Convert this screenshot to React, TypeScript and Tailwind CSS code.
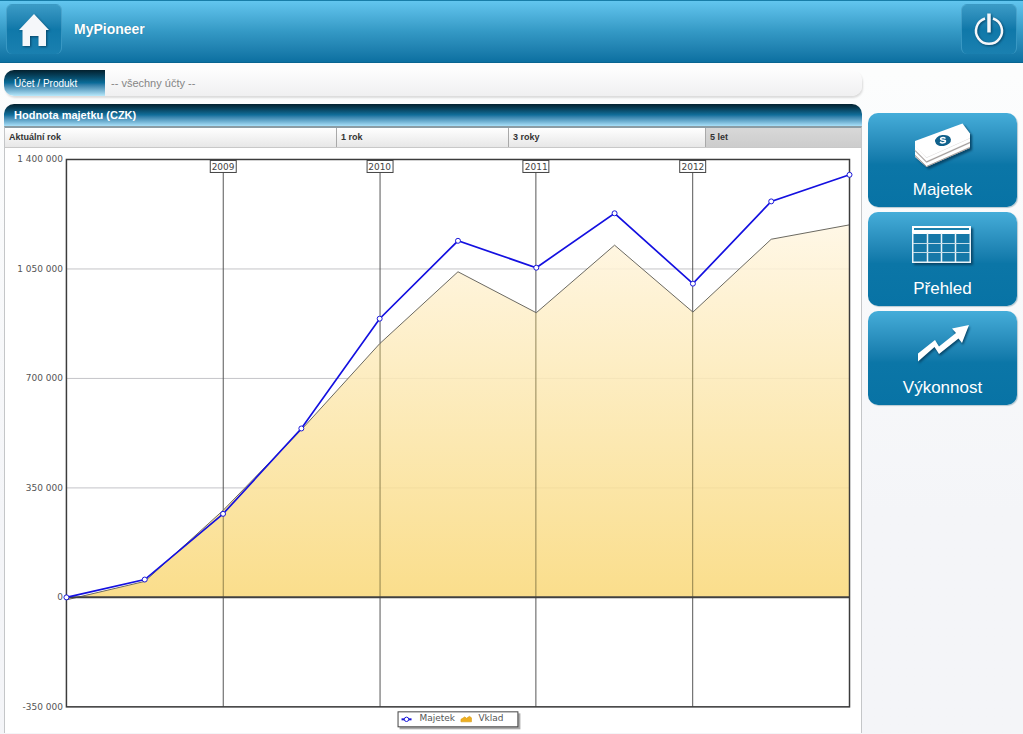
import React from "react";

const years = ["2009", "2010", "2011", "2012"];
const assets = [0, 57, 267, 540, 891, 1140, 1054, 1228, 1003, 1266, 1351];
const deposits = [-8, 51, 278, 536, 811, 1041, 910, 1126, 912, 1145, 1191];
const ticks = [
  { value: 1400, label: "1 400 000" },
  { value: 1050, label: "1 050 000" },
  { value: 700, label: "700 000" },
  { value: 350, label: "350 000" },
  { value: 0, label: "0" },
  { value: -350, label: "-350 000" },
];

const left = 61.5;
const right = 845.5;
const top = 11.5;
const bottom = 559.5;
const xAt = (i: number) => left + (i * (right - left)) / 10;
const yAt = (v: number) => top + ((1400 - v) * (bottom - top)) / 1750;
const toPoints = (values: number[]) =>
  values.map((v, i) => `${xAt(i)},${yAt(v)}`).join(" ");

function Chart() {
  return (
    <svg
      viewBox="0 0 857 586"
      className="block h-auto w-full font-['DejaVu_Sans',sans-serif] text-[9px]"
      role="img"
      aria-label="Hodnota majetku (CZK)"
    >
      <defs>
        <linearGradient id="area" x1="0" y1="0" x2="0" y2="1">
          <stop offset="0" stopColor="#fff6e2" />
          <stop offset="1" stopColor="#f9d878" />
        </linearGradient>
      </defs>
      {ticks.map((t) => (
        <g key={t.label}>
          <line x1={left} x2={right} y1={yAt(t.value)} y2={yAt(t.value)} stroke="#c4c4c8" />
          <text x={58} y={yAt(t.value) + 3} textAnchor="end" fill="#555">
            {t.label}
          </text>
        </g>
      ))}
      <polygon
        points={`${left},${yAt(0)} ${toPoints(deposits)} ${right},${yAt(0)}`}
        fill="url(#area)"
        opacity="0.86"
      />
      {years.map((year, i) => {
        const x = Math.floor(xAt(2 * i + 2)) + 0.5;
        const edge = yAt(deposits[2 * i + 2]);
        return (
          <g key={year}>
            <line x1={x} x2={x} y1={top} y2={edge} stroke="#555" />
            <line x1={x} x2={x} y1={edge} y2={yAt(0)} stroke="#6d6234" strokeOpacity="0.75" />
            <line x1={x} x2={x} y1={yAt(0)} y2={bottom} stroke="#555" />
          </g>
        );
      })}
      <polyline points={toPoints(deposits)} fill="none" stroke="#6a6860" />
      <line x1={left} x2={right} y1={yAt(0)} y2={yAt(0)} stroke="#404040" strokeWidth="2" />
      <rect
        x={left}
        y={top}
        width={right - left}
        height={bottom - top}
        fill="none"
        stroke="#3c3c3c"
        strokeWidth="1.5"
      />
      <polyline points={toPoints(assets)} fill="none" stroke="#1410e0" strokeWidth="1.7" />
      {assets.map((v, i) => (
        <circle key={i} cx={xAt(i)} cy={yAt(v)} r="2.5" fill="#fff" stroke="#1a18d8" />
      ))}
      {years.map((year, i) => (
        <g key={year}>
          <rect
            x={Math.floor(xAt(2 * i + 2)) - 12.5}
            y="12.5"
            width="26"
            height="12"
            fill="#fff"
            stroke="#444"
          />
          <text x={xAt(2 * i + 2)} y="22" textAnchor="middle" fill="#444">
            {year}
          </text>
        </g>
      ))}
      <rect x="395" y="566" width="121" height="16" fill="#aaa" />
      <rect x="393.5" y="564.5" width="120" height="15" fill="#fff" stroke="#444" />
      <line x1="397" x2="407" y1="572" y2="572" stroke="#1a18d8" strokeWidth="2" />
      <circle cx="402" cy="572" r="2.2" fill="#fff" stroke="#1a18d8" />
      <text x="415" y="574" fill="#555">Majetek</text>
      <path d="M456.500 574.500v-2.500l4-2.500 1.500 1.500 3-2 2 1.500v4z" fill="#edae20" stroke="#d99b10" strokeWidth=".6" />
      <text x="474" y="574" fill="#555">Vklad</text>
    </svg>
  );
}

function MoneyIcon() {
  return (
    <svg viewBox="0 0 64 50" className="h-[50px] w-16 drop-shadow-[2px_2px_1px_#07476a]" aria-hidden="true">
      <path d="M4 21v15l11.500 10L59 27V13L15.500 36z" fill="#dcd9d8" />
      <path d="M4 24.500L15.500 37 59 17.500v3L15.500 40 4 28.500zM4 30.500L15.500 42 59 22.500v3L15.500 45 4 33.500z" fill="#fff" />
      <path d="M4 29.500L15.500 41 59 21.500M4 34.500l11.500 11L59 26.500" fill="none" stroke="#a29d9b" />
      <path d="M4 20L51.500 2.500 59 12.500V17L15.500 36.500 4 25z" fill="#fff" />
      <ellipse cx="32" cy="19.500" rx="8" ry="5.500" fill="#10618c" transform="rotate(-8 32 19.500)" />
      <path
        d="M34.500 17.500c-2-1.700-5.500-.8-4.800.8s5 .3 4.800 2-3.800 2.200-5.500.6"
        fill="none"
        stroke="#fff"
        strokeWidth="1.500"
      />
    </svg>
  );
}

function TableIcon() {
  return (
    <svg viewBox="0 0 64 50" className="h-[50px] w-16 drop-shadow-[2px_2px_1px_#07476a]" aria-hidden="true">
      <path d="M1 6h59v37H1z" fill="#1678a8" />
      <path d="M1 6h59v8H1z" fill="#fff" />
      <path d="M3 9h55" stroke="#1b7eaa" strokeWidth="2" />
      <path d="M1.750 13v29.250h57.500V13M16.500 13v29M30.500 13v29M44.500 13v29" fill="none" stroke="#eaf3f8" strokeWidth="1.500" />
      <path d="M2 23.500h57M2 32.500h57" stroke="#c4dce8" strokeWidth="1.200" />
    </svg>
  );
}

function TrendIcon() {
  return (
    <svg viewBox="0 0 64 50" className="h-[50px] w-16 drop-shadow-[1px_2px_1px_#07476a]" aria-hidden="true">
      <path d="M7 34.500L24 21l4 6.500L45 14l-4-4.500 17-3.500-7 18-3.500-4.500L28 35l-4.500-7L7 42.500z" fill="#fff" />
    </svg>
  );
}

const links = [
  { label: "Majetek", icon: <MoneyIcon /> },
  { label: "Přehled", icon: <TableIcon /> },
  { label: "Výkonnost", icon: <TrendIcon /> },
];

const tabs = ["Aktuální rok", "1 rok", "3 roky", "5 let"];

const headerButton =
  "flex h-[50px] w-14 items-center justify-center rounded-md border border-b-0 border-[#6fc0e4]/40 bg-linear-to-b from-[#3a9bc6] via-[#0f78a9] to-[#1a80b0]";

export default function App() {
  const [active, setActive] = React.useState("5 let");
  return (
    <div className="min-h-screen bg-linear-to-b from-[#fcfdfd] from-10% to-[#f4f5f8] to-70% font-['Liberation_Sans',sans-serif]">
      <header className="flex h-[63px] items-start justify-between border-t border-b border-t-[#187da8] border-b-[#086591] bg-linear-to-b from-[#62c6ef] via-[#3499c5] to-[#0b70a1] px-1.5 pt-[3px]">
        <div className="flex items-center gap-3">
          <button type="button" aria-label="Domů" className={headerButton}>
            <svg viewBox="0 0 32 34" className="h-[34px] w-8 drop-shadow-[1px_1px_1px_#07476a]" aria-hidden="true">
              <path d="M16 1L1 17h3.500v16H12V23h8.500v10h7.500V17h3z" fill="#f5f7fa" />
            </svg>
          </button>
          <h1 className="text-sm font-bold text-white [text-shadow:0_0_1px_#1e7198]">MyPioneer</h1>
        </div>
        <button type="button" aria-label="Odhlásit" className={headerButton}>
          <svg viewBox="0 0 34 36" className="h-9 w-[34px] drop-shadow-[1px_1px_1px_#07476a]" aria-hidden="true">
            <path d="M13 6.500a13 13 0 1 0 8 0" fill="none" stroke="#f5f7fa" strokeWidth="2.500" />
            <path d="M17 1.500v19" stroke="#f5f7fa" strokeWidth="3.500" />
          </svg>
        </button>
      </header>

      <div className="flex gap-1.5 pt-[7px] pr-1.5 pl-1">
        <main className="min-w-0 flex-1">
          <div className="flex h-[26px] overflow-hidden rounded-[10px] bg-linear-to-b from-[#fdfdfd] to-[#f0f0f1] shadow-[1px_2px_2px_#dcdcdc]">
            <label
              htmlFor="account"
              className="flex w-[101px] items-center bg-linear-to-b from-[#03212f] via-[#0a6d9a] to-[#b9e9fb] pl-2.5 text-[10px] text-white"
            >
              Účet / Produkt
            </label>
            <select
              id="account"
              className="flex-1 appearance-none bg-transparent px-1.5 text-[11px] text-[#858585]"
            >
              <option>-- všechny účty --</option>
            </select>
          </div>

          <section className="mt-2">
            <h2 className="flex h-[22px] items-center rounded-t-[10px] bg-linear-to-b from-[#03212f] via-[#116f9c] to-[#a9e0f8] pl-2.5 text-[11px] font-bold text-white">
              Hodnota majetku (CZK)
            </h2>
            <div className="border border-t-2 border-[#c4c6c8] border-t-[#8c9da5] border-b-0 bg-white">
              <div
                role="tablist"
                className="grid h-5 grid-cols-[331fr_172fr_197fr_156fr] border-b border-[#c8c8c8]"
              >
                {tabs.map((tab) => (
                  <button
                    key={tab}
                    type="button"
                    role="tab"
                    aria-selected={tab === active}
                    onClick={() => setActive(tab)}
                    className="border-l border-[#a9a9a9] bg-linear-to-b from-white to-[#e7e7e7] pl-1 text-left text-[9px] font-bold text-[#333] first:border-l-0 aria-selected:from-[#d8d8d8] aria-selected:to-[#cccccc]"
                  >
                    {tab}
                  </button>
                ))}
              </div>
              <Chart />
            </div>
          </section>
        </main>

        <nav className="mt-[43px] flex w-[149px] shrink-0 flex-col gap-[5px]">
          {links.map((link) => (
            <a
              key={link.label}
              href="#"
              className="flex h-[94px] flex-col items-center rounded-[10px] bg-linear-to-b from-[#45add9] via-[#0b76a7] via-55% to-[#0873a5] pt-2 text-[17px] leading-6 text-white shadow-[1px_1px_1px_#b7c9d2]"
            >
              {link.icon}
              <span className="pt-[7px]">{link.label}</span>
            </a>
          ))}
        </nav>
      </div>
    </div>
  );
}
